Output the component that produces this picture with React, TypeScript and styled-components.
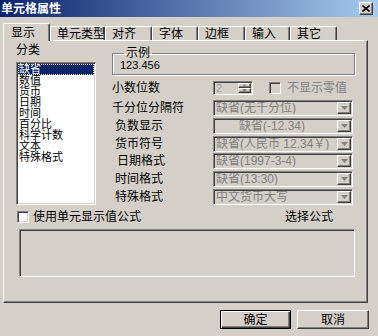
import styled, { createGlobalStyle } from 'styled-components';

const GlobalStyle = createGlobalStyle`
  html, body { margin: 0; padding: 0; }
  body {
    background: #d4d0c8;
    font-family: "Liberation Sans", "Noto Sans CJK SC", sans-serif;
    font-size: 12px;
    color: #000;
  }
  * { box-sizing: border-box; }
`;

const categories = ['缺省', '数值', '货币', '日期', '时间', '百分比', '科学计数', '文本', '特殊格式'];

const tabs = [
  { label: '显示', w: 47, active: true },
  { label: '单元类型', w: 55 },
  { label: '对齐', w: 47 },
  { label: '字体', w: 46 },
  { label: '边框', w: 47 },
  { label: '输入', w: 45 },
  { label: '其它', w: 47 },
];

const fields = [
  { label: '千分位分隔符', indent: 0, value: '缺省(无千分位)' },
  { label: '负数显示', indent: 3, value: '缺省(-12.34)', center: true },
  { label: '货币符号', indent: 3, value: '缺省(人民币 12.34￥)' },
  { label: '日期格式', indent: 5, value: '缺省(1997-3-4)' },
  { label: '时间格式', indent: 3, value: '缺省(13:30)' },
  { label: '特殊格式', indent: 3, value: '中文货币大写' },
];

const App = () => {
  return (
    <>
      <GlobalStyle />
      <Dialog>
        <TitleBar>
          <span>单元格属性</span>
          <CloseButton>
            <svg width="8" height="7" viewBox="0 0 8 7">
              <path d="M0.5 0.5 L7.5 6.5 M7.5 0.5 L0.5 6.5" stroke="#000" strokeWidth="1.6" />
            </svg>
          </CloseButton>
        </TitleBar>

        <TabStrip>
          {tabs.map((t) => (
            <Tab key={t.label} $w={t.w} $active={t.active}>
              {t.label}
            </Tab>
          ))}
        </TabStrip>

        <Panel>
          <PanelBody>
            <div>
              <Caption>分类</Caption>
              <ListBox>
                {categories.map((c, i) => (
                  <ListItem key={c} $selected={i === 0}>
                    {c}
                  </ListItem>
                ))}
              </ListBox>
            </div>

            <div>
              <GroupBox>
                <legend>示例</legend>
                <SampleText>123.456</SampleText>
              </GroupBox>

              <SpinRow>
                <FieldLabel $indent={0}>小数位数</FieldLabel>
                <SpinBox>
                  <SpinValue>2</SpinValue>
                  <SpinButtons>
                    <SpinButton>
                      <svg width="5" height="3" viewBox="0 0 5 3">
                        <path d="M2.5 0 L5 3 L0 3 Z" fill="#808080" />
                      </svg>
                    </SpinButton>
                    <SpinButton>
                      <svg width="5" height="3" viewBox="0 0 5 3">
                        <path d="M0 0 L5 0 L2.5 3 Z" fill="#808080" />
                      </svg>
                    </SpinButton>
                  </SpinButtons>
                </SpinBox>
                <CheckBox $disabled />
                <DimText>不显示零值</DimText>
              </SpinRow>

              <FieldList>
                {fields.map((f) => (
                  <FieldRow key={f.label}>
                    <FieldLabel $indent={f.indent}>{f.label}</FieldLabel>
                    <Combo>
                      <ComboText $center={f.center}>{f.value}</ComboText>
                      <DropButton>
                        <svg width="7" height="4" viewBox="0 0 7 4">
                          <path d="M0 0 L7 0 L3.5 4 Z" fill="#808080" />
                        </svg>
                      </DropButton>
                    </Combo>
                  </FieldRow>
                ))}
              </FieldList>
            </div>
          </PanelBody>

          <OptionsRow>
            <CheckBox />
            <OptionText>使用单元显示值公式</OptionText>
            <PickFormula>选择公式</PickFormula>
          </OptionsRow>

          <FormulaBox />
        </Panel>

        <ButtonRow>
          <PushButton $default $w={71}>确定</PushButton>
          <PushButton $w={72}>取消</PushButton>
        </ButtonRow>
      </Dialog>
    </>
  );
};

const sunken = `
  border: 1px solid;
  border-color: #808080 #ffffff #ffffff #808080;
  box-shadow: inset 1px 1px 0 #404040, inset -1px -1px 0 #d4d0c8;
`;

const raised = `
  border: 1px solid;
  border-color: #ffffff #404040 #404040 #ffffff;
  box-shadow: inset -1px -1px 0 #808080;
  background: #d4d0c8;
`;

const Dialog = styled.div`
  width: 378px;
  height: 336px;
  display: flex;
  flex-direction: column;
  background: #d4d0c8;
  overflow: hidden;
`;

const TitleBar = styled.div`
  height: 17px;
  flex-shrink: 0;
  display: flex;
  align-items: center;
  justify-content: space-between;
  padding: 0 5px 0 1px;
  background: linear-gradient(to right, #0a246a, #a6caf0);
  color: #fff;
  font-weight: bold;
  font-size: 12px;
  line-height: 14px;
`;

const CloseButton = styled.div`
  width: 14px;
  height: 13px;
  display: flex;
  align-items: center;
  justify-content: center;
  ${raised}
`;

const TabStrip = styled.div`
  height: 23px;
  flex-shrink: 0;
  display: flex;
  align-items: flex-end;
  padding-left: 3px;
  position: relative;
  z-index: 1;
`;

const Tab = styled.div<{ $w: number; $active?: boolean }>`
  width: ${(p) => p.$w}px;
  height: ${(p) => (p.$active ? 18 : 14)}px;
  margin-bottom: ${(p) => (p.$active ? -1 : 0)}px;
  padding-left: ${(p) => (p.$active ? 7 : 6)}px;
  padding-top: ${(p) => (p.$active ? 3 : 1)}px;
  background: #d4d0c8;
  border-top: 1px solid #fff;
  border-left: 1px solid #fff;
  border-right: 1px solid #404040;
  border-radius: 2px 2px 0 0;
  box-shadow: inset -1px 0 0 #808080;
  font-size: 12px;
  line-height: 12px;
  white-space: nowrap;
`;

const Panel = styled.div`
  margin-left: 3px;
  width: 365px;
  height: 263px;
  flex-shrink: 0;
  border: 1px solid;
  border-color: #fff #404040 #404040 #fff;
  box-shadow: inset -1px -1px 0 #808080;
  padding: 3px 12px 0 12px;
`;

const PanelBody = styled.div`
  display: grid;
  grid-template-columns: 80px 243px;
  column-gap: 16px;
`;

const Caption = styled.div`
  line-height: 12px;
  height: 12px;
`;

const ListBox = styled.div`
  margin-top: 6px;
  height: 143px;
  background: #fff;
  ${sunken}
  padding: 1px 1px 0 1px;
`;

const ListItem = styled.div<{ $selected?: boolean }>`
  height: 11px;
  line-height: 11px;
  font-size: 11px;
  padding-left: 1px;
  white-space: nowrap;
  background: ${(p) => (p.$selected ? '#0a246a' : 'transparent')};
  color: ${(p) => (p.$selected ? '#fff' : '#000')};
  outline: ${(p) => (p.$selected ? '1px dotted #e8e0a0' : 'none')};
  outline-offset: -1px;
`;

const GroupBox = styled.fieldset`
  margin: 3px 0 0 0;
  padding: 0 6px 3px 7px;
  border: 1px solid #808080;
  box-shadow: inset 1px 1px 0 #fff, 1px 1px 0 #fff;
  min-width: 0;

  legend {
    padding: 0 2px;
    margin-left: 4px;
    line-height: 12px;
    font-size: 12px;
  }
`;

const SampleText = styled.div`
  height: 12px;
  line-height: 12px;
  font-size: 11px;
`;

const SpinRow = styled.div`
  margin-top: 6px;
  height: 14px;
  display: grid;
  grid-template-columns: 101px 40px 12px auto;
  column-gap: 0;
  align-items: center;

  & > :nth-child(3) {
    margin-left: 16px;
  }
`;

const FieldLabel = styled.div<{ $indent: number }>`
  padding-left: ${(p) => p.$indent}px;
  line-height: 12px;
  white-space: nowrap;
`;

const SpinBox = styled.div`
  width: 40px;
  height: 14px;
  display: flex;
  ${sunken}
  background: #d4d0c8;
`;

const SpinValue = styled.div`
  flex: 1;
  color: #a0a0a0;
  line-height: 12px;
  padding-left: 2px;
  font-size: 11px;
`;

const SpinButtons = styled.div`
  width: 14px;
  display: flex;
  flex-direction: column;
  padding: 1px 1px 1px 0;
`;

const SpinButton = styled.div`
  flex: 1;
  display: flex;
  align-items: center;
  justify-content: center;
  ${raised}
`;

const CheckBox = styled.div<{ $disabled?: boolean }>`
  width: 12px;
  height: 12px;
  flex-shrink: 0;
  ${sunken}
  background: ${(p) => (p.$disabled ? '#d4d0c8' : '#fff')};
`;

const DimText = styled.span`
  color: #808080;
  margin-left: 22px;
  line-height: 12px;
  white-space: nowrap;
`;

const FieldList = styled.div`
  margin-top: 5px;
  display: flex;
  flex-direction: column;
  gap: 1.8px;
`;

const FieldRow = styled.div`
  display: grid;
  grid-template-columns: 101px 140px;
  align-items: center;
  height: 16px;
`;

const Combo = styled.div`
  height: 16px;
  display: flex;
  align-items: center;
  ${sunken}
  background: #d4d0c8;
`;

const ComboText = styled.div<{ $center?: boolean }>`
  flex: 1;
  color: #808080;
  padding-left: ${(p) => (p.$center ? 25 : 2)}px;
  line-height: 12px;
  white-space: nowrap;
  overflow: hidden;
`;

const DropButton = styled.div`
  width: 14px;
  height: 12px;
  margin-right: 1px;
  display: flex;
  align-items: center;
  justify-content: center;
  ${raised}
`;

const OptionsRow = styled.div`
  margin-top: 6px;
  height: 12px;
  display: flex;
  align-items: center;
  padding-left: 1px;
`;

const OptionText = styled.span`
  margin-left: 4px;
  line-height: 12px;
`;

const PickFormula = styled.span`
  margin-left: auto;
  margin-right: 22px;
  line-height: 12px;
`;

const FormulaBox = styled.div`
  margin: 6px 0 0 3px;
  height: 48px;
  border: 1px solid;
  border-color: #808080 #ffffff #ffffff #808080;
  box-shadow: inset 1px 1px 0 #404040;
`;

const ButtonRow = styled.div`
  flex: 1;
  display: flex;
  justify-content: flex-end;
  align-items: flex-start;
  gap: 6px;
  padding: 7px 9px 0 0;
`;

const PushButton = styled.div<{ $default?: boolean; $w: number }>`
  width: ${(p) => p.$w}px;
  height: 19px;
  display: flex;
  align-items: center;
  justify-content: center;
  line-height: 12px;
  background: #d4d0c8;
  border: 1px solid;
  border-color: ${(p) => (p.$default ? '#000' : '#fff #404040 #404040 #fff')};
  box-shadow: ${(p) =>
    p.$default
      ? 'inset 1px 1px 0 #fff, inset -1px -1px 0 #404040, inset -2px -2px 0 #808080'
      : 'inset -1px -1px 0 #808080'};
`;

export default App;
